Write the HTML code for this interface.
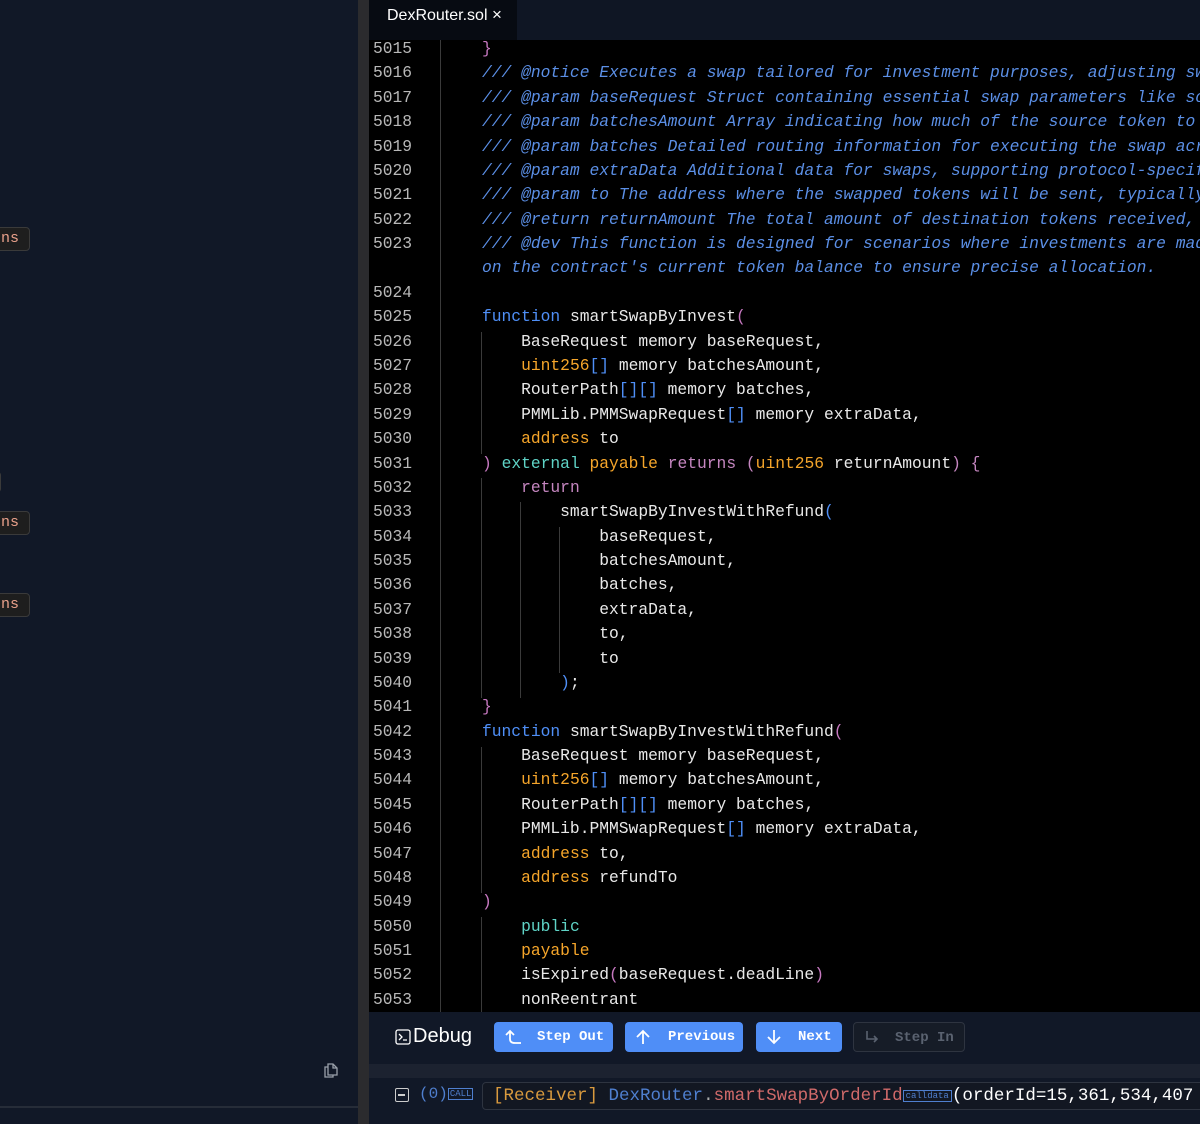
<!DOCTYPE html>
<html><head><meta charset="utf-8"><style>
*{margin:0;padding:0;box-sizing:border-box}
body{width:1200px;height:1124px;overflow:hidden;background:#000;position:relative;font-family:"Liberation Mono",monospace}
.left{position:absolute;left:0;top:0;width:358px;height:1124px;background:#111827}
.div{position:absolute;left:358px;top:0;width:11px;height:1124px;background:#2b2b2e}
.tabbar{position:absolute;left:369px;top:0;width:831px;height:40px;background:#0f1624}
.tab{position:absolute;left:0;top:0;width:148px;height:40px;background:#070b12;color:#fff;font:16px "Liberation Sans",sans-serif;padding:5px 0 0 18px}
.editor{position:absolute;left:369px;top:40px;width:831px;height:972px;background:#000;overflow:hidden}
.row{position:absolute;left:0;height:24px;width:900px;font-size:16.3px;line-height:24px;white-space:pre;color:#e8e8e8}
.ln{position:absolute;left:4px;color:#b8b8b8}
.cd{position:absolute;left:113px}
.c{color:#5b8fe6;font-style:italic}
.k{color:#4f8ff7}.t{color:#f5a52a}.te{color:#5fd3c6}.p{color:#c586c0}.b{color:#4f8ff7}.pk{color:#c678c0}
.g{position:absolute;width:1px;background:#3a3a3a}
.dbg{position:absolute;left:369px;top:1012px;width:831px;height:52px;background:#111827}
.band{position:absolute;left:369px;top:1064px;width:831px;height:14px;background:#1c2230}
.bot{position:absolute;left:369px;top:1078px;width:831px;height:46px;background:#111827}
.btn{position:absolute;top:10px;height:30px;border-radius:4px;background:#4f8ef7;color:#fff;font:bold 14px "Liberation Mono",monospace;line-height:30px;white-space:nowrap;overflow:hidden}
.btn svg{position:absolute;left:10px;top:7px}
.btn span{position:absolute;top:0}
.btn.off{background:#161c27;border:1px solid #2e3440;color:#5a6270}
</style></head><body>
<div class="left">
 <div style="position:absolute;left:-6px;top:227px;width:36px;height:24px;border:1px solid #3a3a3a;border-radius:4px;background:#1e1e1e;color:#e8a08a;font:15px 'Liberation Mono',monospace;line-height:22px;padding-left:6px">ns</div>
 <div style="position:absolute;left:-6px;top:472px;width:7px;height:20px;border:1px solid #3a3a3a;border-radius:3px"></div>
 <div style="position:absolute;left:-6px;top:511px;width:36px;height:24px;border:1px solid #3a3a3a;border-radius:4px;background:#1e1e1e;color:#e8a08a;font:15px 'Liberation Mono',monospace;line-height:22px;padding-left:6px">ns</div>
 <div style="position:absolute;left:-6px;top:593px;width:36px;height:24px;border:1px solid #3a3a3a;border-radius:4px;background:#1e1e1e;color:#e8a08a;font:15px 'Liberation Mono',monospace;line-height:22px;padding-left:6px">ns</div>
 <svg style="position:absolute;left:322px;top:1061px" width="18" height="18" viewBox="0 0 18 18" fill="none" stroke="#9aa0aa" stroke-width="1.3"><path d="M6 3h5l4 4v7H6z"/><path d="M11 3v4h4"/><path d="M6 6H3v10h8v-2"/></svg>
 <div style="position:absolute;left:0;top:1106px;width:358px;height:2px;background:#262c38"></div>
</div>
<div class="div"></div>
<div class="tabbar"><div class="tab">DexRouter.sol <span style="font-size:17px">×</span></div></div>
<div class="editor">
<div class="g" style="left:71px;top:0;height:972px"></div>
<div class="g" style="left:112px;top:292px;height:122px"></div>
<div class="g" style="left:112px;top:438px;height:220px"></div>
<div class="g" style="left:151px;top:462px;height:196px"></div>
<div class="g" style="left:190px;top:487px;height:146px"></div>
<div class="g" style="left:112px;top:707px;height:146px"></div>
<div class="g" style="left:112px;top:877px;height:95px"></div>
<div style="position:absolute;top:-3px;left:0">
<div class="row" style="top:0px"><span class="ln">5015</span><span class="cd"><span class="pk">}</span></span></div>
<div class="row" style="top:24.4px"><span class="ln">5016</span><span class="cd c">/// @notice Executes a swap tailored for investment purposes, adjusting swap</span></div>
<div class="row" style="top:48.8px"><span class="ln">5017</span><span class="cd c">/// @param baseRequest Struct containing essential swap parameters like sou</span></div>
<div class="row" style="top:73.1px"><span class="ln">5018</span><span class="cd c">/// @param batchesAmount Array indicating how much of the source token to</span></div>
<div class="row" style="top:97.5px"><span class="ln">5019</span><span class="cd c">/// @param batches Detailed routing information for executing the swap acro</span></div>
<div class="row" style="top:121.9px"><span class="ln">5020</span><span class="cd c">/// @param extraData Additional data for swaps, supporting protocol-specifi</span></div>
<div class="row" style="top:146.3px"><span class="ln">5021</span><span class="cd c">/// @param to The address where the swapped tokens will be sent, typically</span></div>
<div class="row" style="top:170.7px"><span class="ln">5022</span><span class="cd c">/// @return returnAmount The total amount of destination tokens received,</span></div>
<div class="row" style="top:195px"><span class="ln">5023</span><span class="cd c">/// @dev This function is designed for scenarios where investments are made</span></div>
<div class="row" style="top:219.4px"><span class="cd c">on the contract's current token balance to ensure precise allocation.</span></div>
<div class="row" style="top:243.8px"><span class="ln">5024</span></div>
<div class="row" style="top:268.2px"><span class="ln">5025</span><span class="cd"><span class="k">function</span> smartSwapByInvest<span class="pk">(</span></span></div>
<div class="row" style="top:292.6px"><span class="ln">5026</span><span class="cd">    BaseRequest memory baseRequest,</span></div>
<div class="row" style="top:316.9px"><span class="ln">5027</span><span class="cd">    <span class="t">uint256</span><span class="b">[]</span> memory batchesAmount,</span></div>
<div class="row" style="top:341.3px"><span class="ln">5028</span><span class="cd">    RouterPath<span class="b">[][]</span> memory batches,</span></div>
<div class="row" style="top:365.7px"><span class="ln">5029</span><span class="cd">    PMMLib.PMMSwapRequest<span class="b">[]</span> memory extraData,</span></div>
<div class="row" style="top:390.1px"><span class="ln">5030</span><span class="cd">    <span class="t">address</span> to</span></div>
<div class="row" style="top:414.5px"><span class="ln">5031</span><span class="cd"><span class="pk">)</span> <span class="te">external</span> <span class="t">payable</span> <span class="p">returns</span> <span class="p">(</span><span class="t">uint256</span> returnAmount<span class="p">)</span> <span class="p">{</span></span></div>
<div class="row" style="top:438.8px"><span class="ln">5032</span><span class="cd">    <span class="p">return</span></span></div>
<div class="row" style="top:463.2px"><span class="ln">5033</span><span class="cd">        smartSwapByInvestWithRefund<span class="b">(</span></span></div>
<div class="row" style="top:487.6px"><span class="ln">5034</span><span class="cd">            baseRequest,</span></div>
<div class="row" style="top:512px"><span class="ln">5035</span><span class="cd">            batchesAmount,</span></div>
<div class="row" style="top:536.4px"><span class="ln">5036</span><span class="cd">            batches,</span></div>
<div class="row" style="top:560.7px"><span class="ln">5037</span><span class="cd">            extraData,</span></div>
<div class="row" style="top:585.1px"><span class="ln">5038</span><span class="cd">            to,</span></div>
<div class="row" style="top:609.5px"><span class="ln">5039</span><span class="cd">            to</span></div>
<div class="row" style="top:633.9px"><span class="ln">5040</span><span class="cd">        <span class="b">)</span>;</span></div>
<div class="row" style="top:658.3px"><span class="ln">5041</span><span class="cd"><span class="pk">}</span></span></div>
<div class="row" style="top:682.6px"><span class="ln">5042</span><span class="cd"><span class="k">function</span> smartSwapByInvestWithRefund<span class="pk">(</span></span></div>
<div class="row" style="top:707px"><span class="ln">5043</span><span class="cd">    BaseRequest memory baseRequest,</span></div>
<div class="row" style="top:731.4px"><span class="ln">5044</span><span class="cd">    <span class="t">uint256</span><span class="b">[]</span> memory batchesAmount,</span></div>
<div class="row" style="top:755.8px"><span class="ln">5045</span><span class="cd">    RouterPath<span class="b">[][]</span> memory batches,</span></div>
<div class="row" style="top:780.2px"><span class="ln">5046</span><span class="cd">    PMMLib.PMMSwapRequest<span class="b">[]</span> memory extraData,</span></div>
<div class="row" style="top:804.5px"><span class="ln">5047</span><span class="cd">    <span class="t">address</span> to,</span></div>
<div class="row" style="top:828.9px"><span class="ln">5048</span><span class="cd">    <span class="t">address</span> refundTo</span></div>
<div class="row" style="top:853.3px"><span class="ln">5049</span><span class="cd"><span class="pk">)</span></span></div>
<div class="row" style="top:877.7px"><span class="ln">5050</span><span class="cd">    <span class="te">public</span></span></div>
<div class="row" style="top:902.1px"><span class="ln">5051</span><span class="cd">    <span class="t">payable</span></span></div>
<div class="row" style="top:926.4px"><span class="ln">5052</span><span class="cd">    isExpired<span class="pk">(</span>baseRequest.deadLine<span class="pk">)</span></span></div>
<div class="row" style="top:950.8px"><span class="ln">5053</span><span class="cd">    nonReentrant</span></div>
</div>
</div>
<div class="dbg">
 <svg style="position:absolute;left:26px;top:17px" width="16" height="16" viewBox="0 0 16 16" fill="none" stroke="#fff" stroke-width="1.3"><rect x="1" y="1" width="14" height="14" rx="2"/><path d="M4 5l3 3-3 3M8 11h4"/></svg>
 <div style="position:absolute;left:44px;top:13px;color:#fff;font:20px 'Liberation Sans',sans-serif">Debug</div>
 <div class="btn" style="left:125px;width:119px"><svg width="18" height="16" viewBox="0 0 18 16" fill="none" stroke="#fff" stroke-width="1.8"><path d="M2 6l4-4 4 4M6 2v8c0 3 2 4 5 4h6"/></svg><span style="left:43px">Step Out</span></div>
 <div class="btn" style="left:256px;width:118px"><svg width="16" height="16" viewBox="0 0 16 16" fill="none" stroke="#fff" stroke-width="1.8"><path d="M8 15V2M2 8l6-6 6 6"/></svg><span style="left:43px">Previous</span></div>
 <div class="btn" style="left:387px;width:86px"><svg width="16" height="16" viewBox="0 0 16 16" fill="none" stroke="#fff" stroke-width="1.8"><path d="M8 1v13M2 8l6 6 6-6"/></svg><span style="left:42px">Next</span></div>
 <div class="btn off" style="left:484px;width:112px"><svg width="16" height="16" viewBox="0 0 16 16" fill="none" stroke="#5a6270" stroke-width="1.6"><path d="M3 1v8h10M10 6l3 3-3 3"/></svg><span style="left:41px">Step In</span></div>
</div>
<div class="band"></div>
<div class="bot">
 <div style="position:absolute;left:26px;top:10px;width:14px;height:14px;border:1.5px solid #ccc;border-radius:2px"><div style="position:absolute;left:2px;top:5px;width:7px;height:1.5px;background:#ccc"></div></div>
 <div style="position:absolute;left:50px;top:7px;color:#4f7fcf;font-size:16px">(0)<span style="font-size:9px;border:1px solid #4f7fcf;padding:0 1px;vertical-align:2px">CALL</span></div>
 <div style="position:absolute;left:113px;top:4px;width:740px;height:28px;border:1px solid #2e3440;border-radius:4px;background:#121722;font-size:17.5px;line-height:26px;padding-left:10px;white-space:pre"><span style="color:#d99a3e">[Receiver]</span> <span style="color:#4f7fcf">DexRouter</span><span style="color:#aaa">.</span><span style="color:#d06a6a">smartSwapByOrderId</span><span style="font-size:9px;color:#4f7fcf;border:1px solid #4f7fcf;vertical-align:2px;padding:0 2px">calldata</span><span style="color:#fff">(orderId=15,361,534,407</span></div>
</div>
</body></html>
